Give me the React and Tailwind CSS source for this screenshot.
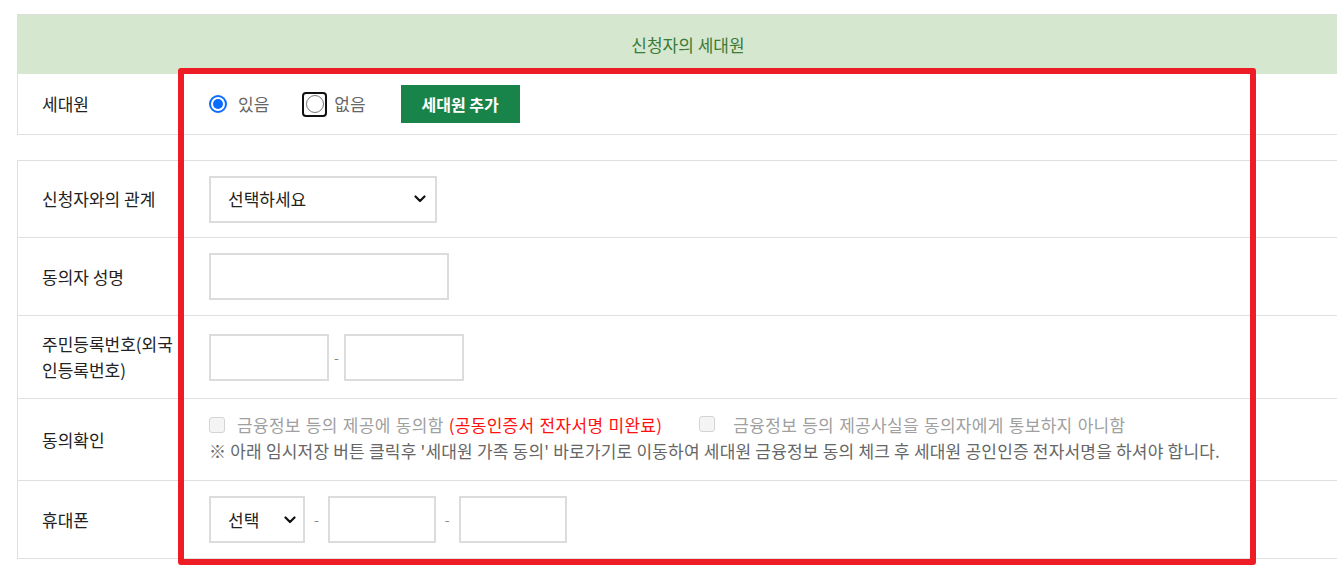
import React from "react";

const font = { fontFamily: '"Noto Sans CJK KR", "Noto Sans", sans-serif' };

const Chevron = () => (
  <svg width="12" height="8" viewBox="0 0 12 8" className="shrink-0">
    <path d="M1.5 1.5 L6 6 L10.5 1.5" fill="none" stroke="#111" strokeWidth="2.2" strokeLinecap="round" strokeLinejoin="round" />
  </svg>
);

const Row = ({ label, h, children }) => (
  <div className={`flex border-l border-b border-[#e0e0e0] ${h}`}>
    <div className="w-[177px] shrink-0 flex items-center pl-[24px] pr-[12px] text-[17px] leading-[26px] text-[#222]">
      {label}
    </div>
    <div className="flex-1 flex items-center pl-[14px]">{children}</div>
  </div>
);

const Box = ({ w }) => (
  <div className={`${w} h-[47px] border-2 border-[#dcdcdc] bg-white`} />
);

const Dash = () => <span className="mx-[9px] text-[14px] text-[#888]">-</span>;

const Checkbox = () => (
  <span className="inline-block w-[16px] h-[16px] rounded-[3px] border border-[#d4d4d4] bg-[#f4f4f4] shrink-0" />
);

export default function App() {
  return (
    <div className="relative w-[1337px] h-[569px] overflow-hidden bg-white" style={font}>
      <div className="pt-[14px] pl-[17px]">
        <div className="w-[1342px]">
          {/* 헤더 */}
          <div className="h-[60px] border-t border-[#dedede] bg-[#d6e7cf] flex items-center justify-center text-[17px] text-[#3b7a37]">
            신청자의 세대원
          </div>

          {/* 세대원 */}
          <Row label="세대원" h="h-[61px]">
            <div className="flex items-center">
              <span className="w-[18px] h-[18px] rounded-full border-2 border-[#0b6cff] flex items-center justify-center">
                <span className="w-[10px] h-[10px] rounded-full bg-[#0b6cff]" />
              </span>
              <span className="ml-[11px] text-[17px] text-[#666]">있음</span>
              <span className="ml-[33px] w-[25px] h-[25px] rounded-[4px] border-2 border-[#111] flex items-center justify-center">
                <span className="w-[18px] h-[18px] rounded-full border border-[#777] bg-white" />
              </span>
              <span className="ml-[7px] text-[17px] text-[#666]">없음</span>
              <button className="ml-[35px] w-[119px] h-[38px] bg-[#198449] text-white text-[16px] font-bold">
                세대원 추가
              </button>
            </div>
          </Row>

          <div className="h-[25px]" />

          <div className="border-t border-[#e0e0e0]">
            <Row label="신청자와의 관계" h="h-[77px]">
              <div className="w-[228px] h-[47px] border-2 border-[#dcdcdc] flex items-center justify-between pl-[17px] pr-[9px] text-[17px] text-[#222]">
                <span>선택하세요</span>
                <Chevron />
              </div>
            </Row>

            <Row label="동의자 성명" h="h-[78px]">
              <Box w="w-[240px]" />
            </Row>

            <Row label="주민등록번호(외국인등록번호)" h="h-[83px]">
              <div className="flex items-center">
                <Box w="w-[120px]" />
                <span className="mx-[5px] text-[14px] text-[#888]">-</span>
                <Box w="w-[120px]" />
              </div>
            </Row>

            <Row label="동의확인" h="h-[82px]">
              <div className="text-[17px] leading-[26px] -mt-[3px]">
                <div className="flex items-center tracking-[0.3px] [word-spacing:1px]">
                  <Checkbox />
                  <span className="ml-[12px] text-[#a0a0a0]">
                    금융정보 등의 제공에 동의함 <span className="text-[#ff1010]">(공동인증서 전자서명 미완료)</span>
                  </span>
                  <span className="ml-[37px]"><Checkbox /></span>
                  <span className="ml-[18px] text-[#a0a0a0]">금융정보 등의 제공사실을 동의자에게 통보하지 아니함</span>
                </div>
                <div className="text-[#666] tracking-[0.2px]">
                  ※ 아래 임시저장 버튼 클릭후 '세대원 가족 동의' 바로가기로 이동하여 세대원 금융정보 동의 체크 후 세대원 공인인증 전자서명을 하셔야 합니다.
                </div>
              </div>
            </Row>

            <Row label="휴대폰" h="h-[78px]">
              <div className="flex items-center">
                <div className="w-[96px] h-[47px] border-2 border-[#dcdcdc] flex items-center justify-between pl-[17px] pr-[7px] text-[17px] text-[#222]">
                  <span>선택</span>
                  <Chevron />
                </div>
                <Dash />
                <Box w="w-[108px]" />
                <Dash />
                <Box w="w-[108px]" />
              </div>
            </Row>
          </div>
        </div>
      </div>

      {/* 강조 표시 */}
      <div className="absolute left-[178px] top-[68px] w-[1078px] h-[497px] border-[6px] border-[#ee1d25] rounded-[3px] pointer-events-none" />
    </div>
  );
}
